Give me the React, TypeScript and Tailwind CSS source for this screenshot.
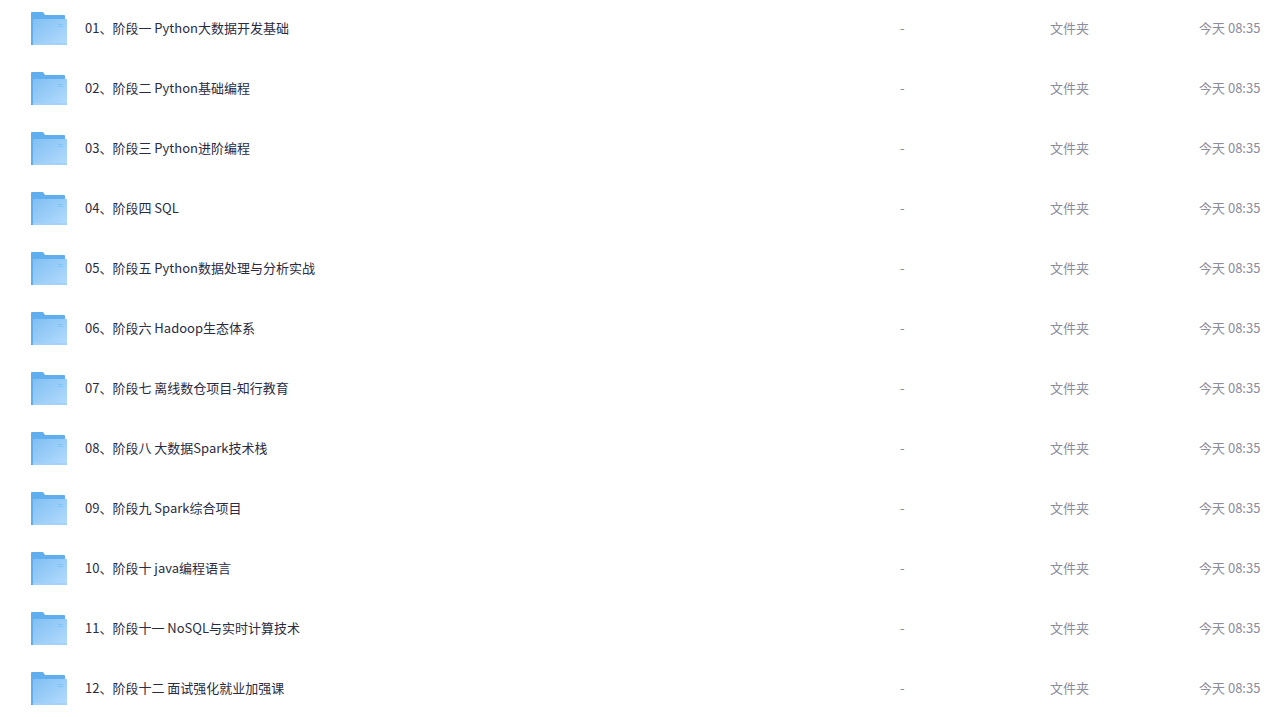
const folders = [
  '01、阶段一 Python大数据开发基础',
  '02、阶段二 Python基础编程',
  '03、阶段三 Python进阶编程',
  '04、阶段四 SQL',
  '05、阶段五 Python数据处理与分析实战',
  '06、阶段六 Hadoop生态体系',
  '07、阶段七 离线数仓项目-知行教育',
  '08、阶段八 大数据Spark技术栈',
  '09、阶段九 Spark综合项目',
  '10、阶段十 java编程语言',
  '11、阶段十一 NoSQL与实时计算技术',
  '12、阶段十二 面试强化就业加强课',
]

function FolderIcon() {
  return (
    <svg width="36" height="33" viewBox="0 0 36 33" className="shrink-0" aria-hidden="true">
      <path d="M0 1Q0 0 1 0H11.4Q12.2 0 12.6 .7L14 3H33Q34 3 34 4V12H4V33H0Z" fill="#60aeed" />
      <rect x="2" y="7" width="34" height="26" rx=".6" fill="url(#folder-front)" />
      <rect x="2" y="31" width="34" height="2" fill="#a3d1fa" />
      <path d="M27 12.5H32M27 14.5H32" stroke="#7fc4f7" strokeWidth="1" />
    </svg>
  )
}

export default function App() {
  return (
    <main className="min-h-screen overflow-hidden bg-white font-['Noto_Sans_CJK_SC',sans-serif] text-[13px] leading-5">
      {/* Gradient shared by every folder icon */}
      <svg width="0" height="0" className="absolute" aria-hidden="true">
        <defs>
          <linearGradient id="folder-front" x1="0" y1="0" x2="1" y2="1">
            <stop offset="0" stopColor="#80bff2" />
            <stop offset="0.5" stopColor="#9acdf8" />
            <stop offset="1" stopColor="#b4dbfd" />
          </linearGradient>
        </defs>
      </svg>

      <table className="-mt-0.5 w-full table-fixed border-collapse">
        <colgroup>
          <col />
          <col className="w-[150px]" />
          <col className="w-[149px]" />
          <col className="w-[85px]" />
        </colgroup>
        <tbody>
          {folders.map((name) => (
            <tr key={name} className="h-[60px] text-[#8a8b9c]">
              <td className="p-0 pl-[31px]">
                <a href="#" className="flex items-center gap-[18px] text-[#2a2b42]">
                  <FolderIcon />
                  <span className="truncate">{name}</span>
                </a>
              </td>
              <td className="p-0">-</td>
              <td className="p-0">文件夹</td>
              <td className="p-0 whitespace-nowrap">今天 08:35</td>
            </tr>
          ))}
        </tbody>
      </table>
    </main>
  )
}
